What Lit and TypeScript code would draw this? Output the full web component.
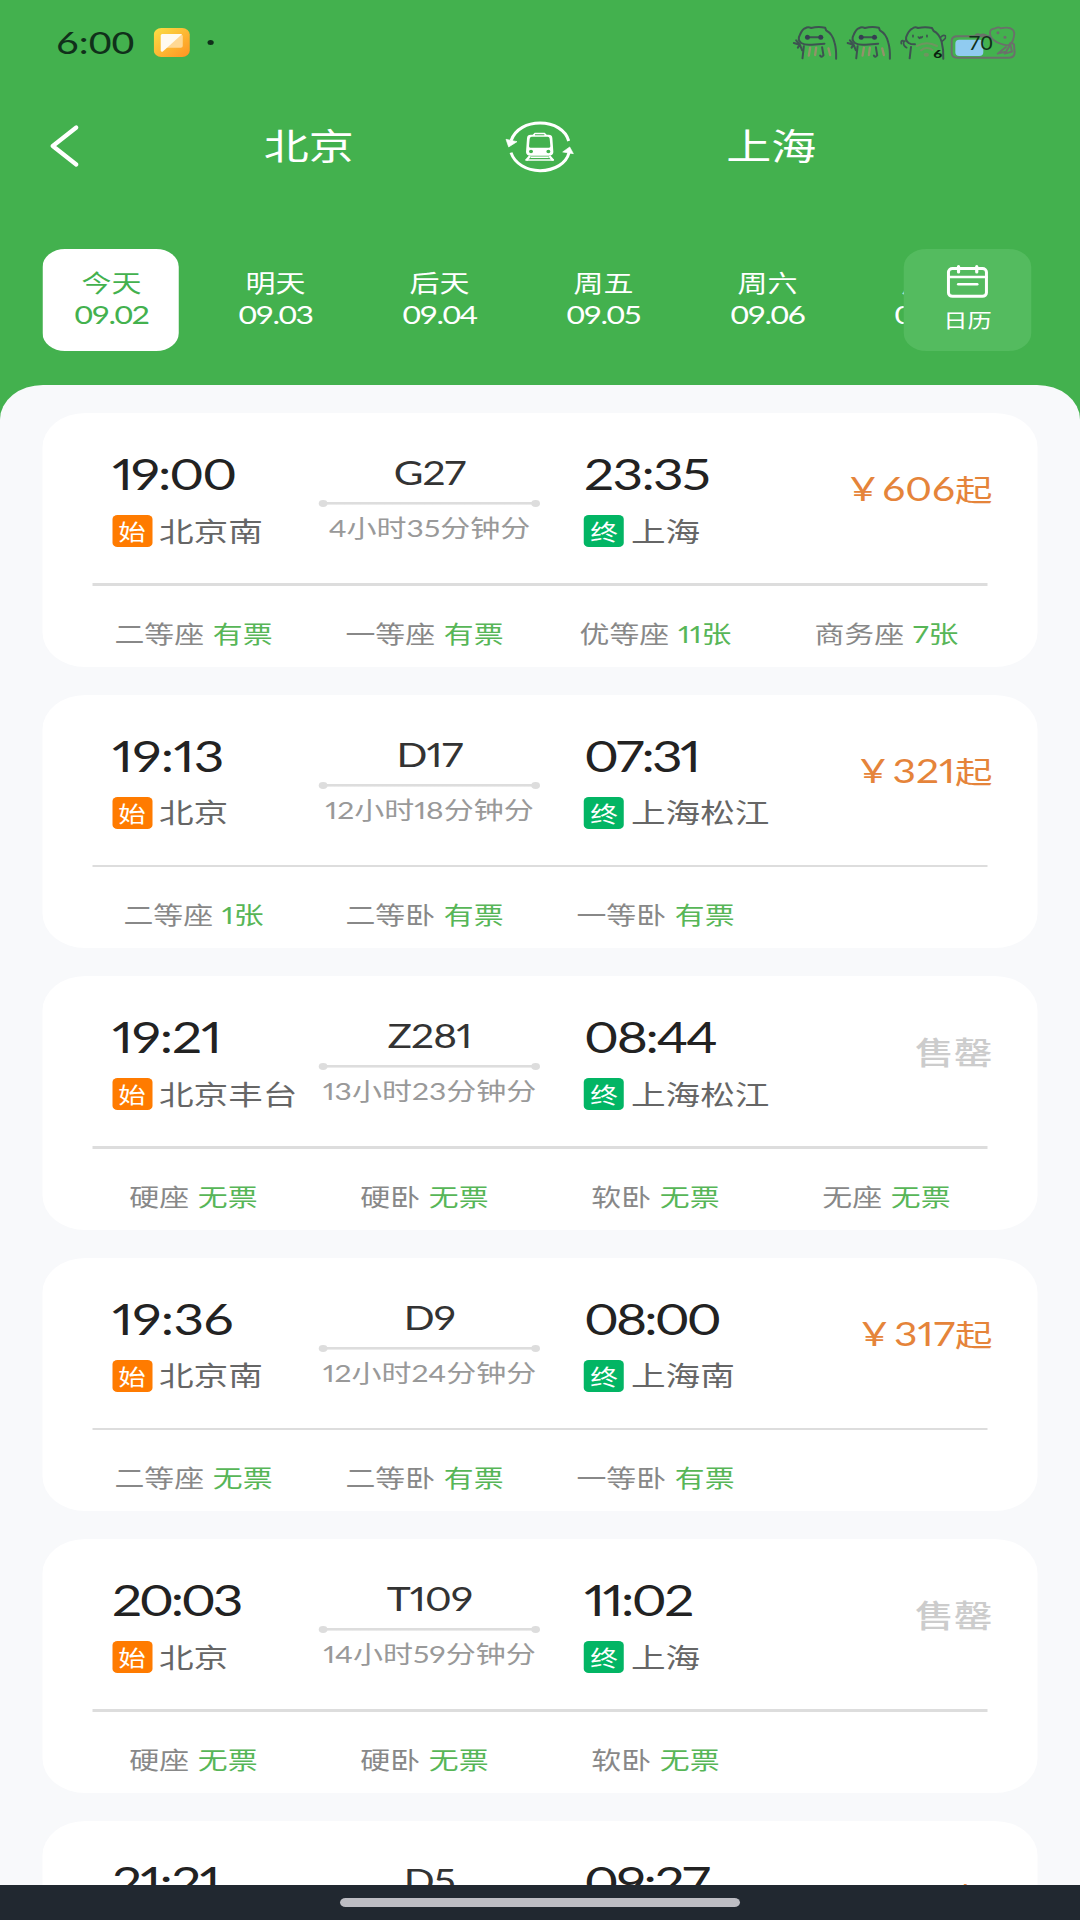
import { LitElement, html, svg, css, nothing } from "lit";
import { customElement, property } from "lit/decorators.js";

interface Seat { name: string; left: string; }
interface Stop { time: string; station: string; tracking: number; }
interface Train {
  code: string; from: Stop; to: Stop;
  duration: string; price?: number; seats: Seat[];
}

const seat = (name: string, left: string): Seat => ({ name, left });
const stop = (time: string, station: string, tracking: number): Stop => ({ time, station, tracking });

const TRAINS: Train[] = [
  { code: "G27", from: stop("19:00", "北京南", -1.6), to: stop("23:35", "上海", -1.3), duration: "4小时35分钟分", price: 606,
    seats: [seat("二等座", "有票"), seat("一等座", "有票"), seat("优等座", "11张"), seat("商务座", "7张")] },
  { code: "D17", from: stop("19:13", "北京", -0.5), to: stop("07:31", "上海松江", -2.1), duration: "12小时18分钟分", price: 321,
    seats: [seat("二等座", "1张"), seat("二等卧", "有票"), seat("一等卧", "有票")] },
  { code: "Z281", from: stop("19:21", "北京丰台", -0.9), to: stop("08:44", "上海松江", -1.8), duration: "13小时23分钟分",
    seats: [seat("硬座", "无票"), seat("硬卧", "无票"), seat("软卧", "无票"), seat("无座", "无票")] },
  { code: "D9", from: stop("19:36", "北京南", -0.5), to: stop("08:00", "上海南", -2.3), duration: "12小时24分钟分", price: 317,
    seats: [seat("二等座", "无票"), seat("二等卧", "有票"), seat("一等卧", "有票")] },
  { code: "T109", from: stop("20:03", "北京", -2.5), to: stop("11:02", "上海", -2), duration: "14小时59分钟分",
    seats: [seat("硬座", "无票"), seat("硬卧", "无票"), seat("软卧", "无票")] },
  { code: "D5", from: stop("21:21", "北京", -1.4), to: stop("09:27", "上海", -1.8), duration: "12小时6分钟分", price: 317,
    seats: [] },
];

const DAYS = [
  ["今天", "09.02"], ["明天", "09.03"], ["后天", "09.04"],
  ["周五", "09.05"], ["周六", "09.06"], ["周日", "09.07"],
];

@customElement("status-bar")
export class StatusBar extends LitElement {
  static styles = css`
    :host { display: flex; align-items: center; height: 84px; padding: 0 50.4px 0 44.8px; box-sizing: border-box; color: #10301a; }
    .clock { font-size: 31.5px; line-height: 40px; letter-spacing: 0px; width: 78.4px; margin-top: -1px; }
    .note { width: 28.8px; height: 29px; display: block; }
    .dot { width: 5px; height: 5px; border-radius: 50%; background: #10301a; margin-left: 14.4px; }
    .tray { margin-left: auto; display: flex; align-items: center; }
    .mascot { display: block; width: 37.3px; height: 35px; margin-right: 5.9px; }
    .wifi { margin-right: 3px; }
    .battery { display: block; width: 53.3px; height: 35px; }
  `;

  private body = svg`
    <path d="M66 140 L70 104 M62 94 Q50 84 58 70 Q66 52 74 50 Q82 44 92 49 Q112 44 134 48 L137 56 Q156 66 162 92 Q168 112 167 141 M62 94 Q74 101 94 99 L132 96" />`;

  private masked() {
    return html`<svg class="mascot" viewBox="36 40 140 105" preserveAspectRatio="none" fill="none"
      stroke="#3d5350" stroke-width="6" stroke-linecap="round" stroke-linejoin="round">
      ${this.body}
      <path d="M40 94 L58 99 M47 86 L58 99 L52 108 M58 99 L65 116 M88 77 H118" />
      <circle cx="81" cy="77" r="7.5" fill="#363f52" stroke="none" />
      <circle cx="121" cy="77" r="7.5" fill="#363f52" stroke="none" />
      <path d="M125 107 L129 131 Q124 139 119 132" />
      <path d="M89 108 L85 132 M107 108 L104 130 M144 110 L149 130" stroke="#92926a" stroke-width="7" />
    </svg>`;
  }

  render() {
    return html`
      <div class="clock">6:00</div>
      <svg class="note" viewBox="0 0 36 29" preserveAspectRatio="none">
        <defs>
          <linearGradient id="g" x1="0" y1="0" x2="1" y2="1">
            <stop offset="0" stop-color="#fbdf45" /><stop offset="1" stop-color="#ff9322" />
          </linearGradient>
        </defs>
        <rect width="36" height="29" rx="7.5" ry="6.5" fill="url(#g)" />
        <path d="M12 6.5 H27 Q29 6.5 29 8 V18 Q29 19.7 27 19.7 H12 Z" fill="#ffd894" />
        <path d="M8.5 6 H28.5 L8.8 23.8 Q7 24 7 22.5 V7.5 Q7 6 8.5 6 Z" fill="#fffaf0" />
      </svg>
      <div class="dot"></div>
      <div class="tray">
        ${this.masked()}${this.masked()}
        <svg class="mascot wifi" viewBox="360 40 140 105" preserveAspectRatio="none" fill="none"
          stroke="#3d5350" stroke-width="6" stroke-linecap="round" stroke-linejoin="round">
          <path d="M389 140 L393 106 M386 94 Q373 84 381 70 Q389 54 397 51 Q404 44 414 49 Q436 44 456 49 L461 58 Q478 66 485 90 Q491 112 490 141 M386 94 Q392 98 405 98" />
          <path d="M364 96 Q362 86 369 87 L371 91 L375 88 M371 91 Q369 103 380 108 M483 76 Q490 68 497 73 Q500 80 486 89" stroke-width="5" />
          <path d="M399 71 V75 M441 71 V75 M415 76 Q419 84 421 76 Q425 80 427 75" stroke-width="5" />
          <path d="M411 103 Q440 86 471 103 M423 116 Q440 103 458 115" stroke="#6f9560" />
          <ellipse cx="439" cy="129" rx="8" ry="6" fill="#6f9560" stroke="none" />
          <text x="460" y="138" font-size="36" font-weight="900" fill="#0b200f" stroke="none" textLength="27" lengthAdjust="spacingAndGlyphs">6</text>
        </svg>
        <svg class="battery" viewBox="512 40 200 105" preserveAspectRatio="none" fill="none"
          stroke="#6b706b" stroke-width="6" stroke-linecap="round" stroke-linejoin="round">
          <path d="M632 74 H534 Q517 74 517 88 V124 Q517 138 534 138 H690 Q706 138 706 122 L704 98 Q699 92 692 95" />
          <rect x="528" y="84" width="84" height="49" rx="12" fill="#90cbf0" stroke="none" />
          <path d="M632 62 Q632 52 648 50 Q658 44 664 50 Q690 44 700 54 Q708 62 703 78 Q700 98 684 101 Q660 98 644 86 Q632 78 632 62 Z M588 72 Q592 64 604 70 Q616 64 632 80 M702 84 L680 120 L655 126 L680 106 M694 102 L698 120 L676 126" stroke-width="5.5" />
          <circle cx="656" cy="63" r="4.5" fill="#6b706b" stroke="none" /><circle cx="677" cy="77" r="4.5" fill="#6b706b" stroke="none" />
          <text x="567" y="116" font-size="58" fill="#10301a" stroke="none" textLength="73" lengthAdjust="spacingAndGlyphs">70</text>
        </svg>
      </div>`;
  }
}

@customElement("train-card")
export class TrainCard extends LitElement {
  @property({ attribute: false }) train!: Train;

  static styles = css`
    :host { display: block; height: 253.5px; flex: none; background: #fff; border-radius: 34.4px; overflow: hidden; }
    .route { display: grid; grid-template-columns: 165.6px 176.8px 1fr auto; height: 170px; padding: 0 35.6px 0 55.2px; box-sizing: border-box; }
    .stop { padding-top: 37px; }
    .arrive { padding-left: 35.2px; }
    .time { font-size: 42.5px; line-height: 48px; color: #222; font-variant-numeric: proportional-nums; white-space: nowrap; }
    .place { display: flex; align-items: center; gap: 5.6px; margin-top: 17px; height: 32px; font-size: 27.7px; line-height: 33px; color: #666; white-space: nowrap; }
    .badge { width: 32px; height: 32px; border-radius: 4px; color: #fff; font-size: 22px; line-height: 33px; text-align: center; }
    .origin { background: #ff7b00; }
    .terminal { background: #02b564; }
    .middle { padding-top: 40px; text-align: center; }
    .code { font-size: 32.5px; line-height: 40px; letter-spacing: -0.7px; color: #333; font-variant-numeric: proportional-nums; }
    .line { display: flex; align-items: center; justify-content: space-between; height: 7px; margin-top: 7px;
      background: linear-gradient(#ddd, #ddd) center / calc(100% - 4px) 2.6px no-repeat; }
    .end { width: 7.2px; height: 7px; border-radius: 50%; background: #ddd; }
    .duration { font-size: 24px; line-height: 30px; margin: 6px -20px 0; color: #999; white-space: nowrap; font-variant-numeric: proportional-nums; }
    .price { padding-top: 56px; font-size: 32.5px; line-height: 40px; word-spacing: -3.4px; color: #e5843a; white-space: nowrap; font-variant-numeric: proportional-nums; }
    .from { font-size: 30px; }
    .soldout { color: #ccc; font-size: 31px; font-weight: 500; }
    .rule { height: 2.6px; background: #ddd; margin: 0 39.2px; }
    .seats { display: grid; grid-template-columns: repeat(4, 184.8px); padding-left: 28px; }
    .seat { display: flex; justify-content: center; gap: 7px; margin-top: 30px; font-size: 23.9px; line-height: 36px; color: #888; white-space: nowrap; font-variant-numeric: proportional-nums; }
    .left { color: #57b657; }
  `;

  render() {
    const t = this.train;
    return html`
      <div class="route">
        <div class="stop">
          <div class="time" style="letter-spacing:${t.from.tracking}px">${t.from.time}</div>
          <div class="place"><span class="badge origin">始</span><span>${t.from.station}</span></div>
        </div>
        <div class="middle">
          <div class="code">${t.code}</div>
          <div class="line"><span class="end"></span><span class="end"></span></div>
          <div class="duration">${t.duration}</div>
        </div>
        <div class="stop arrive">
          <div class="time" style="letter-spacing:${t.to.tracking}px">${t.to.time}</div>
          <div class="place"><span class="badge terminal">终</span><span>${t.to.station}</span></div>
        </div>
        ${t.price
          ? html`<div class="price">¥ ${t.price}<span class="from">起</span></div>`
          : html`<div class="price soldout">售罄</div>`}
      </div>
      <div class="rule"></div>
      ${t.seats.length
        ? html`<div class="seats">${t.seats.map((s) => html`
            <div class="seat"><span>${s.name}</span><span class="left">${s.left}</span></div>`)}</div>`
        : nothing}`;
  }
}

@customElement("app-root")
export class AppRoot extends LitElement {
  /* The screen is composed on an 864-unit-wide canvas and widened to 1080. */
  static styles = css`
    :host { display: block; width: 1080px; height: 1920px; overflow: hidden; }
    .screen { width: 864px; height: 1920px; transform: scaleX(1.25); transform-origin: 0 0; display: flex; flex-direction: column;
      background: #43b14e; overflow: hidden; font-family: Lato, "Noto Sans CJK SC", sans-serif; font-weight: 400; }
    .nav { display: grid; grid-template-columns: 110px 1fr 100px 1fr 110px; align-items: center; height: 124px; color: #fff; flex: none; }
    .back { width: 24px; height: 44px; margin-left: 39.4px; display: block; }
    .city { font-size: 36px; line-height: 44px; text-align: center; }
    .depart { padding-left: 2px; }
    .dest { padding-right: 2px; }
    .swap { width: 55.5px; height: 53.3px; justify-self: center; margin-top: 1.6px; display: block; }
    .dates { display: flex; height: 101.5px; margin: 41px 39.2px 0 34.4px; flex: none; }
    .strip { display: flex; gap: 22.4px; width: 688.8px; overflow: hidden; }
    .day { width: 108.8px; flex: none; border-radius: 18px; color: #fff; text-align: center; padding: 18px 0 0 1px; box-sizing: border-box; }
    .today { background: #fff; color: #43b14e; }
    .name { font-size: 24px; line-height: 32px; }
    .date { font-size: 25.5px; line-height: 31px; letter-spacing: -1.2px; }
    .calendar { flex: 1; background: #54bb5f; border-radius: 18px; display: flex; flex-direction: column; align-items: center; color: #fff; }
    .cal { width: 33.6px; height: 34px; margin-top: 15px; display: block; }
    .caltext { font-size: 19.4px; line-height: 24px; margin-top: 11px; }
    .panel { flex: 1; min-height: 0; margin-top: 34px; background: #f8f9fb; border-radius: 34.4px 34.4px 0 0; padding: 28.5px 34.4px 0; display: flex; flex-direction: column; gap: 28px; overflow: hidden; }
    .gesture { height: 35px; flex: none; background: #212830; display: flex; justify-content: center; padding-top: 13px; box-sizing: border-box; }
    .pill { width: 319.2px; height: 9px; border-radius: 5px; background: #bdbdc3; }
  `;

  render() {
    return html`
      <div class="screen">
        <status-bar></status-bar>
        <div class="nav">
          <svg class="back" viewBox="0 0 30 44" preserveAspectRatio="none" fill="none" stroke="#fff" stroke-width="4.2" stroke-linecap="round" stroke-linejoin="round">
            <path d="M27.5 3.5 L4 22 L27.5 40.5" />
          </svg>
          <div class="city depart">北京</div>
          <svg class="swap" viewBox="75 60 208 160" preserveAspectRatio="none" fill="none" stroke="#fff" stroke-width="9">
            <path d="M93 122 C106 86 142 69 180 69 C222 69 257 90 266 123 M93 158 C104 191 140 212 180 212 C224 212 259 190 267 158" />
            <path d="M78 118 L111 125 L86 141 Z M269 141 L280 161 L248 156 Z" fill="#fff" stroke-width="2" stroke-linejoin="round" />
            <path fill="#fff" stroke="none" fill-rule="evenodd" d="M158 104 L164 98 H194 L200 104 H206 Q216 104 217 114 L220 156 Q220 167 206 167 H152 Q138 167 138 156 L141 114 Q142 104 152 104 Z M155 110 Q150 110 149 116 L147 139 Q147 143 151 143 H207 Q211 143 211 139 L209 116 Q208 110 203 110 Z M165 103 V106 H193 V103 Z M153 149 A6 5.5 0 1 0 153 160 A6 5.5 0 1 0 153 149 Z M205 149 A6 5.5 0 1 0 205 160 A6 5.5 0 1 0 205 149 Z" />
            <path d="M150 168 L139 181 M208 168 L219 181" stroke-width="7" />
            <path d="M152 172 H206 M136 180 H222" stroke-width="4.5" />
          </svg>
          <div class="city dest">上海</div>
        </div>
        <div class="dates">
          <div class="strip">
            ${DAYS.map(([name, date], i) => html`
              <div class="day ${i === 0 ? "today" : ""}"><div class="name">${name}</div><div class="date">${date}</div></div>`)}
          </div>
          <div class="calendar">
            <svg class="cal" viewBox="0 0 42 34" preserveAspectRatio="none" fill="none" stroke="#fff" stroke-width="3" stroke-linecap="round">
              <rect x="2.2" y="4.5" width="38" height="27.8" rx="4" ry="3.5" />
              <path d="M2.2 13 H40.2" stroke-width="2.6" />
              <path d="M12.3 2.5 V8 M30.5 2.5 V8" stroke-width="3.2" />
              <path d="M12 20.2 H31" stroke-width="2.6" />
            </svg>
            <div class="caltext">日历</div>
          </div>
        </div>
        <div class="panel">
          ${TRAINS.map((t) => html`<train-card .train=${t}></train-card>`)}
        </div>
        <div class="gesture"><div class="pill"></div></div>
      </div>`;
  }
}
